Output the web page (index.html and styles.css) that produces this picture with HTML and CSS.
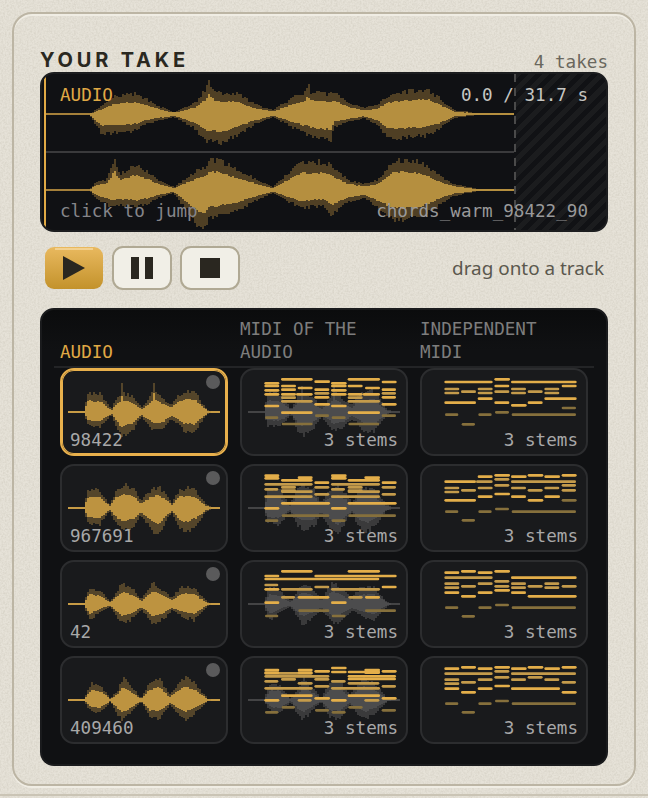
FILE: index.html
```html
<!DOCTYPE html>
<html>
  <head>
    <meta charset="utf-8" />
    <title>Your take</title>
    <link rel="stylesheet" href="styles.css">
  </head>
  <body>
    <svg class="grain" width="648" height="798" aria-hidden="true">
      <filter id="grain-noise">
        <feTurbulence type="fractalNoise" baseFrequency="0.55" numOctaves="3" seed="4" />
        <feColorMatrix type="matrix" values="0 0 0 0 0.45  0 0 0 0 0.42  0 0 0 0 0.34  0.5 0 0 0 -0.17" />
      </filter>
      <rect width="648" height="798" filter="url(#grain-noise)" />
    </svg>

    <div class="shell">
      <section class="panel">
        <header class="panel-head">
          <h2 class="panel-title">YOUR TAKE</h2>
          <span class="panel-count">4 takes</span>
        </header>

        <div class="take">
          <svg id="take-wave" class="take-wave" width="564" height="156" viewBox="42 74 564 156"></svg>
          <div class="take-rest"></div>
          <span class="take-label take-kind">AUDIO</span>
          <span class="take-label take-time">0.0 / 31.7 s</span>
          <span class="take-label take-hint">click to jump</span>
          <span class="take-label take-name">chords_warm_98422_90</span>
        </div>

        <div class="transport">
          <button class="btn btn-play" aria-label="Play">
            <svg width="24" height="24" viewBox="0 0 24 24"><path d="M1 0 L23 12 L1 24 Z" /></svg>
          </button>
          <button class="btn" aria-label="Pause">
            <svg width="24" height="24" viewBox="0 0 24 24"><path d="M1 1 H9 V23 H1 Z M15 1 H23 V23 H15 Z" /></svg>
          </button>
          <button class="btn" aria-label="Stop">
            <svg width="24" height="24" viewBox="0 0 24 24"><path d="M2 2 H22 V22 H2 Z" /></svg>
          </button>
          <span class="transport-hint">drag onto a track</span>
        </div>

        <div class="library">
          <div class="library-head">
            <div class="col-title col-active">AUDIO</div>
            <div class="col-title">MIDI OF THE AUDIO</div>
            <div class="col-title">INDEPENDENT MIDI</div>
          </div>
          <div id="library-grid" class="library-grid"></div>
        </div>
      </section>
    </div>

    <script src="script.js"></script>
  </body>
</html>
```

FILE: styles.css
```css
html, body {
  margin: 0;
  padding: 0;
}

body {
  position: relative;
  width: 648px;
  height: 798px;
  overflow: hidden;
  background-color: #e6e2d8;
  font-family: 'DejaVu Sans Mono', monospace;
  font-size: 17.6px;
}

.grain {
  position: absolute;
  top: 0;
  left: 0;
  z-index: -1;
}

.shell {
  box-sizing: border-box;
  height: 796px;
  padding: 12px 12px 8px;
  border-bottom: 2px solid #cac4b5;
}

.panel {
  box-sizing: border-box;
  height: 774px;
  padding: 34px 26px 0;
  border: 2px solid #bcb5a4;
  border-radius: 20px;
  box-shadow: 0 2px 0 #f0ede4, inset 0 2px 0 #f0ede4;
}

.panel-head {
  display: flex;
  justify-content: space-between;
  align-items: flex-end;
  height: 24px;
}

.panel-title {
  margin: 0;
  font-family: 'Inter', sans-serif;
  font-size: 20px;
  font-weight: 700;
  letter-spacing: 3.8px;
  line-height: 24px;
  color: #2a2820;
}

.panel-count {
  color: #6a675d;
  line-height: 20px;
}

.take {
  position: relative;
  box-sizing: border-box;
  height: 160px;
  border: 2px solid #1c1d1f;
  border-radius: 14px;
  background: #101114;
  overflow: hidden;
}

.take::before {
  content: "";
  position: absolute;
  left: 2px;
  top: 2px;
  bottom: 2px;
  width: 2px;
  background: #e0a945;
}

.take-wave {
  position: absolute;
  top: 0;
  left: 0;
}

.take-rest {
  position: absolute;
  top: 0;
  bottom: 0;
  left: 472px;
  right: 0;
  background: repeating-linear-gradient(135deg, #1b1c1e 0, #1b1c1e 5px, #111215 5px, #111215 10px);
}

.take-rest::before {
  content: "";
  position: absolute;
  top: 0;
  bottom: 0;
  left: 0;
  width: 2px;
  background: repeating-linear-gradient(#4a4a4a 0, #4a4a4a 8px, transparent 8px, transparent 14px);
}

.take-label {
  position: absolute;
  line-height: 22px;
}

.take-kind {
  left: 18px;
  top: 10px;
  color: #e0a945;
}

.take-time {
  right: 18px;
  top: 10px;
  color: #c6c6c2;
}

.take-hint {
  left: 18px;
  bottom: 8px;
  color: #85858a;
}

.take-name {
  right: 18px;
  bottom: 8px;
  color: #99999a;
}

.transport {
  display: flex;
  align-items: center;
  gap: 8px;
  height: 44px;
  margin: 14px 4px 18px 5px;
}

.btn {
  display: flex;
  align-items: center;
  justify-content: center;
  box-sizing: border-box;
  width: 60px;
  height: 44px;
  padding: 0;
  border: 2px solid #b0a994;
  border-radius: 11px;
  background: #f1efe7;
}

.btn svg {
  fill: #2a2720;
}

.btn-play {
  position: relative;
  width: 58px;
  height: 42px;
  margin-right: 1px;
  border: 0;
  border-radius: 9px;
  background: linear-gradient(#e9b95f, #c3922b);
}

.btn-play::before {
  content: "";
  position: absolute;
  top: 1px;
  left: 10px;
  right: 10px;
  height: 2px;
  background: #f3d190;
}

.transport-hint {
  margin-left: auto;
  font-family: 'Noto Sans', sans-serif;
  font-size: 18.9px;
  color: #5b584e;
}

.library {
  box-sizing: border-box;
  height: 458px;
  padding: 8px 12px 0;
  border: 2px solid #1a1b1d;
  border-radius: 14px;
  background: linear-gradient(#0b0c0d, #101113 40px);
}

.library-head {
  display: grid;
  grid-template-columns: repeat(3, 168px);
  column-gap: 12px;
  align-items: end;
  height: 48px;
  padding: 0 6px;
  border-bottom: 2px solid #232426;
}

.col-title {
  line-height: 23px;
  padding-bottom: 2px;
  color: #7d7d7d;
}

.col-active {
  color: #e0a945;
}

.library-grid {
  display: grid;
  grid-template-columns: repeat(3, 168px);
  grid-auto-rows: 88px;
  gap: 8px 12px;
  padding: 0 6px;
}

.card {
  position: relative;
  box-sizing: border-box;
  border: 2px solid #2c2d2f;
  border-radius: 14px;
  background: #191a1c;
}

.card-on {
  border-color: #e8b04c;
  box-shadow: inset 0 0 0 1px #e8b04c;
}

.card-art {
  position: absolute;
  top: -2px;
  left: -2px;
}

.card-dot {
  position: absolute;
  top: 5px;
  right: 6px;
  width: 14px;
  height: 14px;
  border-radius: 50%;
  background: #5a5a5b;
}

.card-label {
  position: absolute;
  bottom: 2px;
  left: 8px;
  line-height: 24px;
  color: #a8a8a8;
}

.card-stems {
  left: auto;
  right: 8px;
}
```

FILE: script.js
```js
var SVG_NS = 'http://www.w3.org/2000/svg';

// take envelope, screen px: [x, up, down]
var TAKE_TOP = [[88,0,0],[100,7,19],[113,17,19],[133,20,17],[147,14,9],[160,7,6],[173,2,3],[193,10,14],[205,24,26],[208,34,28],[212,25,28],[220,20,29],[237,20,21],[253,10,11],[272,4,3],[293,17,14],[305,22,20],[307,32,20],[309,22,22],[330,20,26],[333,22,13],[347,12,8],[363,6,4],[377,9,11],[387,19,24],[400,22,24],[427,24,21],[437,17,16],[453,4,4],[477,1,1],[514,1,1]];
var TAKE_BOTTOM = [[88,0,0],[95,8,8],[105,10,14],[111,22,16],[113,35,16],[116,22,16],[120,17,15],[135,25,17],[147,18,14],[157,10,8],[173,3,3],[197,20,35],[203,22,37],[210,32,28],[233,22,22],[260,8,8],[272,3,3],[300,28,18],[323,28,15],[330,25,25],[347,10,12],[363,6,8],[377,10,18],[393,30,30],[420,28,28],[437,15,15],[453,6,6],[477,1,1],[514,1,1]];

// thumbnail envelopes, in 3x units: [x, up, down]
var THUMBS = [
  [[128,4,4],[140,55,40],[175,55,45],[195,30,25],[210,8,8],[228,45,50],[238,50,70],[241,92,70],[245,55,70],[270,50,60],[300,15,15],[320,35,35],[335,60,55],[338,88,55],[342,60,55],[365,40,50],[390,20,20],[410,50,35],[430,60,60],[460,65,60],[480,30,30],[500,6,6],[512,3,3]],
  [[128,4,4],[140,55,45],[175,55,50],[205,10,10],[228,60,50],[250,70,65],[280,55,55],[298,20,20],[325,50,55],[350,65,85],[375,40,35],[392,15,15],[415,55,60],[440,60,70],[465,50,50],[495,10,10],[512,3,3]],
  [[128,4,4],[145,50,50],[175,40,25],[208,8,8],[235,50,50],[245,60,60],[280,40,40],[300,15,15],[335,65,60],[360,45,50],[392,20,20],[420,50,35],[460,50,50],[475,30,30],[500,5,5],[512,3,3]],
  [[128,4,4],[150,50,35],[175,45,40],[208,5,5],[230,30,45],[245,65,60],[280,30,25],[300,5,5],[325,50,50],[355,65,55],[385,15,15],[430,70,60],[460,50,40],[500,4,4],[512,3,3]]
];

// midi notes in 3x card units: [x1, x2, y]; b bright, m medium, d dim
var LINKED = [
  { b: [[73,118,46],[73,118,54],[73,118,67],[73,118,79],[123,218,34],[123,168,54],[123,168,65],[173,218,60],[123,168,79],[168,218,79],[223,270,41],[223,268,65],[223,268,88],[223,270,109],[273,320,46],[273,320,54],[273,320,67],[273,320,79],[323,420,34],[323,368,54],[375,420,60],[323,368,79],[368,420,79],[425,470,42],[425,468,65],[425,468,88],[425,470,109],[73,118,114],[273,320,114],[123,218,134],[323,420,134]],
    m: [[123,168,89],[223,268,76],[323,368,89],[425,468,76],[123,218,100],[323,420,100]],
    d: [[75,115,149],[275,317,149],[125,218,168],[325,418,168],[225,267,143],[425,468,143]] },
  { b: [[73,118,35],[73,118,43],[173,218,41],[123,218,49],[273,320,35],[273,320,43],[373,420,41],[323,420,49],[223,268,56],[425,470,56],[123,270,118],[323,470,118],[73,118,133],[273,320,133]],
    m: [[73,218,61],[273,420,61],[123,168,70],[123,168,80],[73,115,76],[273,315,76],[323,368,70],[323,368,80],[123,218,83],[323,420,83],[223,268,70],[425,468,70],[223,268,91],[425,468,91],[73,218,98],[273,420,98]],
    d: [[75,115,170],[275,317,170],[125,268,155],[325,468,155]] },
  { b: [[123,218,34],[323,420,34],[73,118,48],[223,470,48],[73,418,57],[73,118,88],[425,470,81],[73,118,128],[273,320,128],[173,268,112],[375,420,112]],
    m: [[73,115,75],[123,218,88],[223,268,81],[273,420,88],[123,165,112],[325,368,112]],
    d: [[75,115,168],[275,317,168],[175,268,152],[375,468,152]] },
  { b: [[73,118,42],[73,118,50],[173,218,42],[173,218,50],[273,320,36],[273,320,48],[373,420,42],[373,420,50],[223,270,46],[323,420,48],[425,470,46],[323,468,61],[323,468,69],[123,218,119],[323,420,119],[73,118,133],[223,270,127],[273,320,133],[425,470,127]],
    m: [[73,218,52],[73,268,61],[123,168,70],[223,268,70],[73,115,76],[273,317,76],[173,218,82],[323,418,82],[223,268,91],[425,468,91],[73,218,97],[273,420,97],[173,215,133],[373,418,133]],
    d: [[75,115,169],[125,165,154],[225,267,163],[275,317,169],[325,368,154],[425,468,163]] }
];
var FREE = [
  { b: [[73,218,42],[73,168,104],[173,218,92],[223,270,34],[223,268,54],[223,268,104],[273,470,42],[425,470,54],[373,470,92],[273,320,112],[323,368,104]],
    m: [[73,118,63],[73,118,75],[123,168,71],[173,218,63],[173,218,75],[223,268,71],[273,318,63],[273,318,75],[323,368,71],[373,418,63],[373,418,75]],
    d: [[75,115,140],[175,215,140],[225,267,133],[275,468,140],[125,165,169],[425,468,120]] },
  { b: [[173,218,38],[223,270,34],[273,320,38],[323,370,34],[373,420,38],[425,470,34],[73,168,53],[73,168,109],[173,218,98],[223,270,90],[273,318,98],[323,370,109],[373,420,98]],
    m: [[168,218,53],[223,268,46],[273,468,53],[73,118,72],[73,118,84],[123,168,79],[173,218,72],[223,268,64],[273,318,72],[323,368,79],[373,418,72],[425,468,64],[425,468,79]],
    d: [[75,115,143],[175,215,143],[225,267,135],[275,468,143],[125,165,169],[425,470,109]] },
  { b: [[73,118,38],[123,168,34],[173,218,38],[223,270,34],[273,470,53],[73,118,98],[123,168,109],[173,218,98],[273,318,98],[323,470,109],[223,270,91]],
    m: [[73,218,53],[223,268,64],[73,118,71],[73,118,83],[123,168,79],[173,218,71],[223,268,79],[273,318,71],[273,318,83],[323,368,79],[373,418,71],[373,418,83],[425,470,79]],
    d: [[75,115,143],[175,215,143],[225,267,135],[275,468,143],[125,165,169]] },
  { b: [[73,118,38],[123,168,34],[173,218,38],[223,270,34],[273,320,38],[323,370,34],[373,420,38],[425,470,34],[73,118,98],[123,168,109],[173,218,98],[223,270,90],[273,420,98],[425,470,109]],
    m: [[223,268,46],[73,218,53],[273,468,53],[73,118,71],[73,118,83],[123,168,79],[173,218,71],[223,268,64],[273,318,71],[323,368,64],[373,418,71],[425,468,79]],
    d: [[75,115,143],[175,215,143],[225,267,135],[275,468,143],[125,165,169]] }
];

var AUDIO_IDS = ['98422', '967691', '42', '409460'];
var GOLD = { outer: '#54452a', inner: '#bd9340', line: '#c79b45' };
var GREY = { outer: '#3a3a3b', inner: '#4c4c4d', line: '#444445' };
var TAKE_COLORS = { outer: '#4f3f24', inner: '#b58f3f', line: '#a5803a' };

var seed = 7;
function rnd() {
  seed = (seed * 16807) % 2147483647;
  return seed / 2147483647;
}

function el(name, attrs) {
  var node = document.createElementNS(SVG_NS, name);
  for (var key in attrs) node.setAttribute(key, attrs[key]);
  return node;
}

function envAt(env, x, side) {
  if (x <= env[0][0] || x >= env[env.length - 1][0]) return 0;
  for (var i = 1; i < env.length; i++) {
    if (x <= env[i][0]) {
      var t = (x - env[i - 1][0]) / (env[i][0] - env[i - 1][0]);
      return env[i - 1][side] + (env[i][side] - env[i - 1][side]) * t;
    }
  }
  return 0;
}

function drawWave(svg, env, o) {
  var outer = '', inner = '';
  for (var x = o.from; x < o.to; x += o.step) {
    var up = envAt(env, x, 1), down = envAt(env, x, 2);
    if (up + down <= 0) continue;
    var a = Math.round(up * (1 + (rnd() - 0.5) * 0.22));
    var b = Math.round(down * (1 + (rnd() - 0.5) * 0.22));
    outer += 'M' + x + ' ' + (o.cy - a) + 'h' + o.step + 'v' + (a + b) + 'h-' + o.step + 'z';
    var ia = Math.round(up * 0.6 * (1 + (rnd() - 0.5) * 0.12));
    var ib = Math.round(down * 0.6 * (1 + (rnd() - 0.5) * 0.12));
    inner += 'M' + x + ' ' + (o.cy - ia) + 'h' + o.step + 'v' + (ia + ib) + 'h-' + o.step + 'z';
  }
  svg.appendChild(el('path', { d: outer, fill: o.colors.outer, 'shape-rendering': 'crispEdges' }));
  svg.appendChild(el('rect', { x: o.lineFrom, y: o.cy - o.lineH / 2, width: o.lineTo - o.lineFrom, height: o.lineH, fill: o.colors.line }));
  svg.appendChild(el('path', { d: inner, fill: o.colors.inner, 'shape-rendering': 'crispEdges' }));
}

function drawNotes(svg, notes) {
  var tones = { b: '#e3ae4a', m: '#c49b4b', d: '#86703c' };
  ['d', 'm', 'b'].forEach(function (tone) {
    notes[tone].forEach(function (n) {
      svg.appendChild(el('rect', { x: n[0], y: n[2] - 4, width: n[1] - n[0], height: 8, rx: 4, fill: tones[tone] }));
    });
  });
}

function art() {
  return el('svg', { 'class': 'card-art', width: 168, height: 88, viewBox: '0 0 504 264' });
}

// thumbnail envelopes start 60 units left of the card, hence the shifted group
function thumbWave(svg, env, colors) {
  var group = el('g', { transform: 'translate(-60 0)' });
  drawWave(group, env, { from: 128, to: 512, step: 6, cy: 132, lineFrom: 84, lineTo: 540, lineH: 6, colors: colors });
  svg.appendChild(group);
}

function addLabel(card, text, extra) {
  var label = document.createElement('span');
  label.className = 'card-label' + (extra || '');
  label.textContent = text;
  card.appendChild(label);
}

function buildCard(cls) {
  var card = document.createElement('div');
  card.className = 'card' + (cls || '');
  document.getElementById('library-grid').appendChild(card);
  return card;
}

// take
var takeSvg = document.getElementById('take-wave');
takeSvg.appendChild(el('rect', { x: 46, y: 151, width: 468, height: 2, fill: '#3a3a3c' }));
drawWave(takeSvg, TAKE_TOP, { from: 88, to: 514, step: 2, cy: 114, lineFrom: 46, lineTo: 514, lineH: 2, colors: TAKE_COLORS });
drawWave(takeSvg, TAKE_BOTTOM, { from: 88, to: 514, step: 2, cy: 190, lineFrom: 46, lineTo: 514, lineH: 2, colors: TAKE_COLORS });

// library rows
AUDIO_IDS.forEach(function (id, row) {
  var audio = buildCard(row === 0 ? ' card-on' : '');
  var a = art();
  thumbWave(a, THUMBS[row], GOLD);
  audio.appendChild(a);
  var dot = document.createElement('span');
  dot.className = 'card-dot';
  audio.appendChild(dot);
  addLabel(audio, id);

  var linked = buildCard();
  var b = art();
  thumbWave(b, THUMBS[row], GREY);
  drawNotes(b, LINKED[row]);
  linked.appendChild(b);
  addLabel(linked, '3 stems', ' card-stems');

  var free = buildCard();
  var c = art();
  drawNotes(c, FREE[row]);
  free.appendChild(c);
  addLabel(free, '3 stems', ' card-stems');
});
```
